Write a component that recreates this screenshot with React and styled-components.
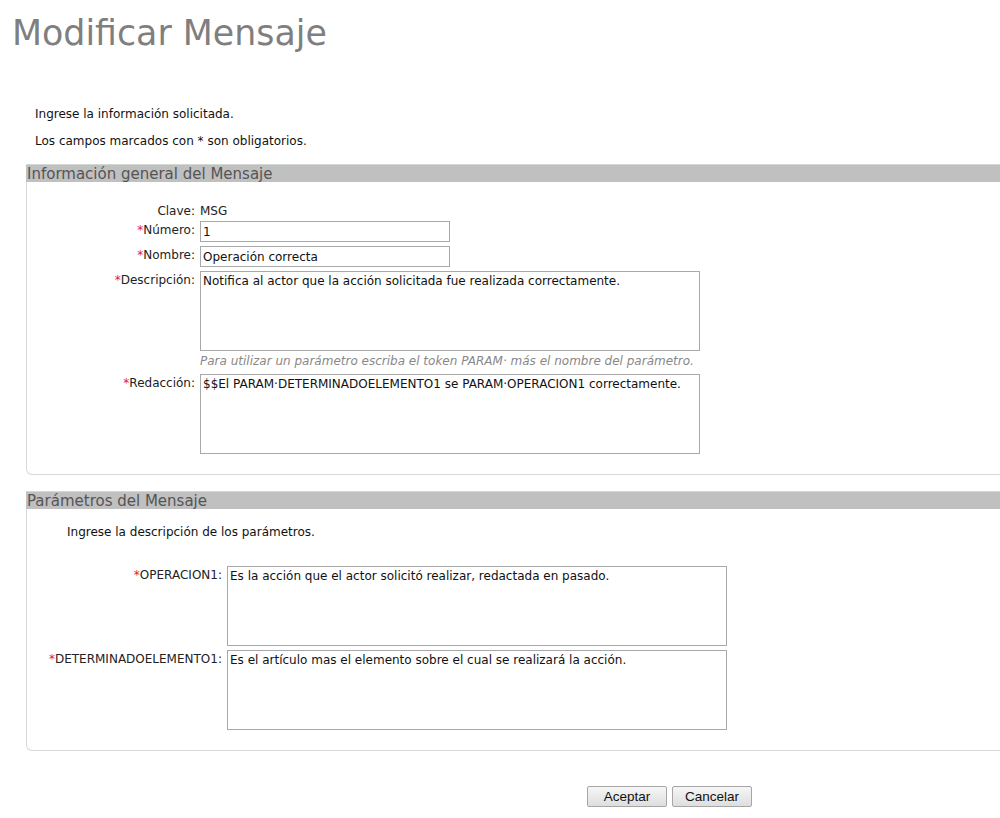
import React from "react";
import styled, { createGlobalStyle } from "styled-components";

const Global = createGlobalStyle`
  html, body { margin: 0; padding: 0; background: #fff; }
  body { font-family: "DejaVu Sans", Verdana, sans-serif; font-size: 12px; color: #111; }
`;

const Page = styled.div`
  width: 1000px;
  overflow: hidden;
  padding-bottom: 10px;
`;

const Title = styled.h1`
  margin: 0;
  padding: 13px 0 0 12px;
  font-family: "DejaVu Sans", Verdana, sans-serif;
  font-weight: normal;
  font-size: 34.8px;
  line-height: 40px;
  color: #7f7f7f;
`;

const Intro = styled.p`
  margin: 0;
  padding-left: ${(p) => p.$indent || 35}px;
  line-height: 16px;
  margin-top: ${(p) => p.$top || 0}px;
`;

const Section = styled.fieldset`
  margin: ${(p) => p.$top}px -30px 0 26px;
  padding: 0 0 ${(p) => p.$bottom}px 0;
  border: 1px solid #d8d8d8;
  border-top: none;
  border-radius: 0 0 0 6px;
  min-width: 0;
`;

const Legend = styled.div`
  background: #c0c0c0;
  border-top: 1px solid #d2d8d2;
  height: 17px;
  line-height: 18px;
  font-size: 15px;
  color: #555;
  padding-left: 1px;
  margin-left: -1px;
`;

const Grid = styled.div`
  display: grid;
  grid-template-columns: ${(p) => p.$label}px 1fr;
  column-gap: 5px;
  row-gap: 4px;
  padding-top: ${(p) => p.$top}px;
  align-items: start;
`;

const Label = styled.label`
  text-align: right;
  line-height: 16px;
  padding-top: 1px;
  color: #222;
  white-space: nowrap;
`;

const Req = styled.span`
  color: #e0242c;
`;

const StaticLabel = styled.div`
  text-align: right;
  line-height: 12px;
  padding-top: 5px;
  color: #222;
`;

const Value = styled.div`
  line-height: 12px;
  padding-top: 5px;
  color: #222;
`;

const Input = styled.input`
  box-sizing: border-box;
  width: 250px;
  height: 21px;
  border: 1px solid #a9a9a9;
  padding: 1px 2px 0;
  font-family: "DejaVu Sans", Verdana, sans-serif;
  font-size: 12px;
  color: #111;
  margin: 0;
`;

const Area = styled.textarea`
  box-sizing: border-box;
  width: 500px;
  height: 80px;
  border: 1px solid #a9a9a9;
  padding: 2px 2px;
  font-family: "DejaVu Sans", Verdana, sans-serif;
  font-size: 12px;
  line-height: 15px;
  color: #111;
  resize: none;
  margin: 0;
  display: block;
`;

const Hint = styled.div`
  font-style: italic;
  color: #888;
  line-height: 16px;
  margin-top: 2px;
  margin-bottom: 1px;
  white-space: nowrap;
`;

const Buttons = styled.div`
  display: flex;
  gap: 5px;
  padding-left: 587px;
  margin-top: 35px;
`;

const Button = styled.button`
  box-sizing: border-box;
  width: 80px;
  height: 21px;
  font-family: "Liberation Sans", Arial, sans-serif;
  font-size: 13.5px;
  color: #111;
  background: linear-gradient(#f6f6f6, #dedede);
  border: 1px solid #a6a6a6;
  border-radius: 2px;
  padding: 0;
`;

export default function App() {
  return (
    <Page>
      <Global />
      <Title>Modificar Mensaje</Title>
      <Intro $top={53}>Ingrese la información solicitada.</Intro>
      <Intro $top={11}>Los campos marcados con * son obligatorios.</Intro>

      <Section $top={15} $bottom={20}>
        <Legend>Información general del Mensaje</Legend>
        <Grid $label={168} $top={18}>
          <StaticLabel>Clave:</StaticLabel>
          <Value>MSG</Value>
          <Label><Req>*</Req>Número:</Label>
          <Input defaultValue="1" />
          <Label><Req>*</Req>Nombre:</Label>
          <Input defaultValue="Operación correcta" />
          <Label><Req>*</Req>Descripción:</Label>
          <div>
            <Area defaultValue="Notifica al actor que la acción solicitada fue realizada correctamente." />
            <Hint>Para utilizar un parámetro escriba el token PARAM· más el nombre del parámetro.</Hint>
          </div>
          <Label><Req>*</Req>Redacción:</Label>
          <Area defaultValue="$$El PARAM·DETERMINADOELEMENTO1 se PARAM·OPERACION1 correctamente." />
        </Grid>
      </Section>

      <Section $top={16} $bottom={20}>
        <Legend>Parámetros del Mensaje</Legend>
        <Intro $indent={40} $top={15}>Ingrese la descripción de los parámetros.</Intro>
        <Grid $label={195} $top={26}>
          <Label><Req>*</Req>OPERACION1:</Label>
          <Area defaultValue="Es la acción que el actor solicitó realizar, redactada en pasado." />
          <Label><Req>*</Req>DETERMINADOELEMENTO1:</Label>
          <Area defaultValue="Es el artículo mas el elemento sobre el cual se realizará la acción." />
        </Grid>
      </Section>

      <Buttons>
        <Button>Aceptar</Button>
        <Button>Cancelar</Button>
      </Buttons>
    </Page>
  );
}
